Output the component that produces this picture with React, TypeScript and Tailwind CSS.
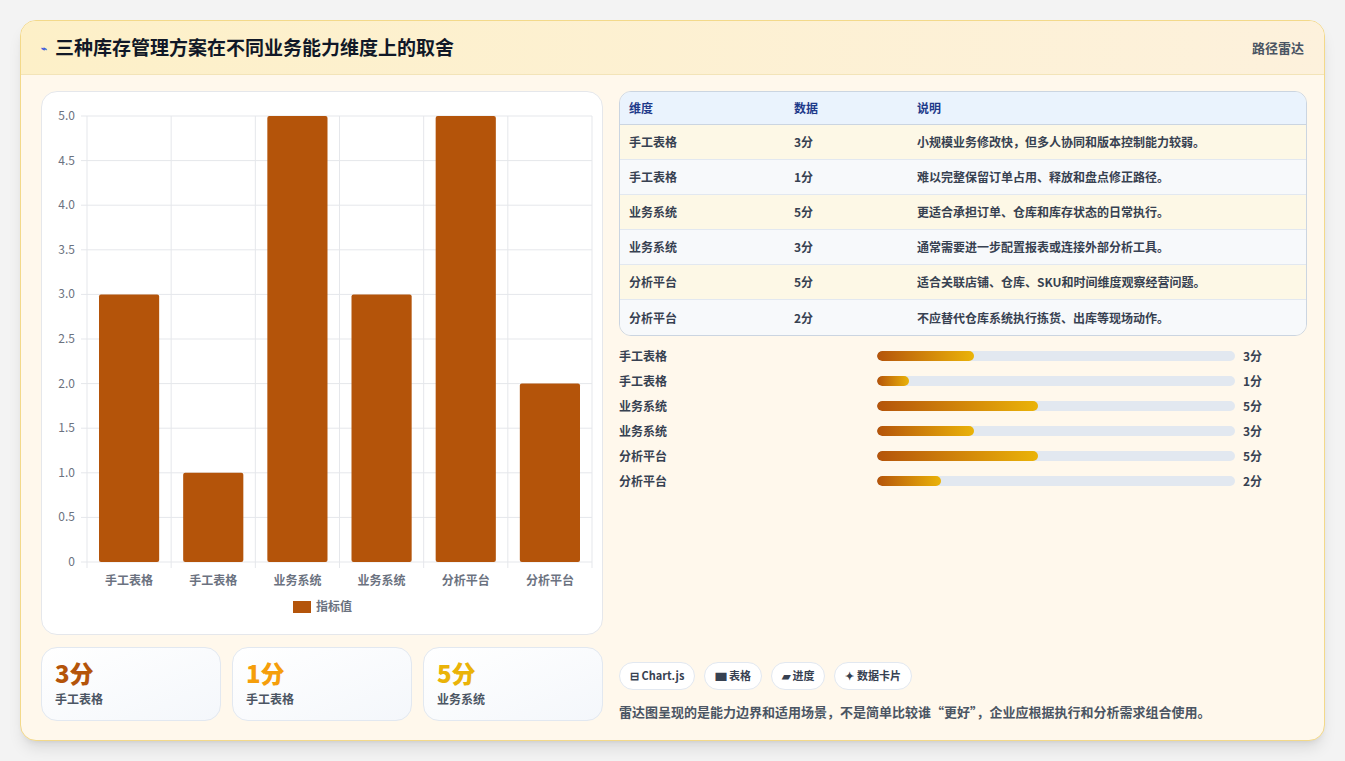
const rows = [
  { name: "手工表格", v: 3, note: "小规模业务修改快，但多人协同和版本控制能力较弱。" },
  { name: "手工表格", v: 1, note: "难以完整保留订单占用、释放和盘点修正路径。" },
  { name: "业务系统", v: 5, note: "更适合承担订单、仓库和库存状态的日常执行。" },
  { name: "业务系统", v: 3, note: "通常需要进一步配置报表或连接外部分析工具。" },
  { name: "分析平台", v: 5, note: "适合关联店铺、仓库、SKU和时间维度观察经营问题。" },
  { name: "分析平台", v: 2, note: "不应替代仓库系统执行拣货、出库等现场动作。" },
];

function Chart() {
  const L = 45, R = 550, T = 24, B = 470;
  const cw = (R - L) / 6;
  const ticks = [0, 0.5, 1, 1.5, 2, 2.5, 3, 3.5, 4, 4.5, 5];
  const y = (v: number) => B - (v / 5) * (B - T);
  return (
    <svg width="562" height="544" className="block" style={{ fontFamily: '"Noto Sans CJK SC", sans-serif' }}>
      {ticks.map((t) => (
        <g key={t}>
          <line x1={L - 6} x2={R} y1={y(t)} y2={y(t)} stroke="#e5e7eb" />
          <text x={L - 12} y={y(t) + 4} textAnchor="end" fontSize="12" fill="#6b7280">
            {t === 0 ? "0" : t.toFixed(1)}
          </text>
        </g>
      ))}
      {Array.from({ length: 7 }).map((_, i) => (
        <line key={i} x1={L + i * cw} x2={L + i * cw} y1={T} y2={B + 6} stroke="#e5e7eb" />
      ))}
      {rows.map((r, i) => (
        <g key={i}>
          <rect x={L + i * cw + 12} y={y(r.v)} width={cw - 24} height={B - y(r.v)} rx="2" fill="#b4540a" />
          <text x={L + i * cw + cw / 2} y={B + 23} textAnchor="middle" fontSize="12" fontWeight="600" fill="#6b7280">
            {r.name}
          </text>
        </g>
      ))}
      <rect x="251" y="509" width="18" height="12" fill="#b4540a" />
      <text x="274" y="519" fontSize="12" fontWeight="600" fill="#6b7280">指标值</text>
    </svg>
  );
}

export default function App() {
  const font = { fontFamily: '"Noto Sans CJK SC", "Noto Sans", sans-serif' };
  return (
    <div className="min-h-screen bg-[#f3f3f3] p-5" style={font}>
      <div className="rounded-2xl border border-[#f3d98a] bg-[#fff8ec] shadow-lg overflow-hidden h-[721px] flex flex-col">
        <header className="h-[56px] flex items-center justify-between px-5 bg-gradient-to-r from-[#fdf0c8] to-[#fdf1dc] border-b border-[#f3e4b8]">
          <h1 className="flex items-center gap-2 text-[19px] font-bold text-[#111827]">
            <span className="text-[10px] text-[#3b5bdb]">⌁</span>三种库存管理方案在不同业务能力维度上的取舍
          </h1>
          <span className="text-[13px] font-semibold text-[#4b5563]">路径雷达</span>
        </header>
        <div className="flex-1 grid grid-cols-[562px_688px] gap-4 px-5 pt-4 pb-[19px]">
          <div className="flex flex-col gap-3">
            <div className="rounded-2xl border border-[#e5e7eb] bg-white h-[544px] overflow-hidden">
              <Chart />
            </div>
            <div className="grid grid-cols-3 gap-[11px]">
              {[
                { v: "3分", l: "手工表格", c: "text-[#b4540a]" },
                { v: "1分", l: "手工表格", c: "text-[#f59e0b]" },
                { v: "5分", l: "业务系统", c: "text-[#eab308]" },
              ].map((s, i) => (
                <div key={i} className="rounded-2xl border border-[#e2e8f0] bg-gradient-to-br from-white to-[#f4f7fb] h-[74px] px-[13px] pt-[10px]">
                  <div className={`text-[24px] font-extrabold leading-[30px] ${s.c}`}>{s.v}</div>
                  <div className="text-[12px] font-semibold text-[#4b5563] mt-[2px]">{s.l}</div>
                </div>
              ))}
            </div>
          </div>
          <div className="flex flex-col">
            <div className="rounded-xl border border-[#cbd5e1] overflow-hidden text-[12px] font-semibold">
              <div className="grid grid-cols-[165px_123px_1fr] h-[33px] items-center px-[9px] bg-[#eaf3fd] border-b border-[#cbd5e1] text-[#1e3a8a]">
                <span>维度</span><span>数据</span><span>说明</span>
              </div>
              {rows.map((r, i) => (
                <div key={i} className={`grid grid-cols-[165px_123px_1fr] h-[35px] items-center px-[9px] text-[#374151] ${i < 5 ? "border-b border-[#e2e8f0]" : ""} ${i % 2 === 0 ? "bg-[#fdf8e6]" : "bg-[#f7f9fb]"}`}>
                  <span>{r.name}</span><span>{r.v}分</span><span>{r.note}</span>
                </div>
              ))}
            </div>
            <div className="mt-[7px] flex flex-col">
              {rows.map((r, i) => (
                <div key={i} className="grid grid-cols-[258px_358px_1fr] items-center h-[25px] text-[12px] font-semibold text-[#374151]">
                  <span>{r.name}</span>
                  <div className="h-[10px] rounded-full bg-[#e2e8f0] overflow-hidden">
                    <div className="h-full rounded-full bg-gradient-to-r from-[#b4540a] to-[#eab308]" style={{ width: `${r.v * 9}%` }} />
                  </div>
                  <span className="pl-2 font-bold">{r.v}分</span>
                </div>
              ))}
            </div>
            <div className="mt-auto">
              <div className="flex gap-[9px]">
                {["⊟ Chart.js", "▆ 表格", "▰ 进度", "✦ 数据卡片"].map((p) => (
                  <span key={p} className="h-[28px] px-[10px] flex items-center rounded-full border border-[#e2e8f0] bg-white text-[11px] font-bold text-[#374151]">{p}</span>
                ))}
              </div>
              <p className="mt-[12px] text-[13px] font-semibold text-[#4b5563]">雷达图呈现的是能力边界和适用场景，不是简单比较谁“更好”，企业应根据执行和分析需求组合使用。</p>
            </div>
          </div>
        </div>
      </div>
    </div>
  );
}
